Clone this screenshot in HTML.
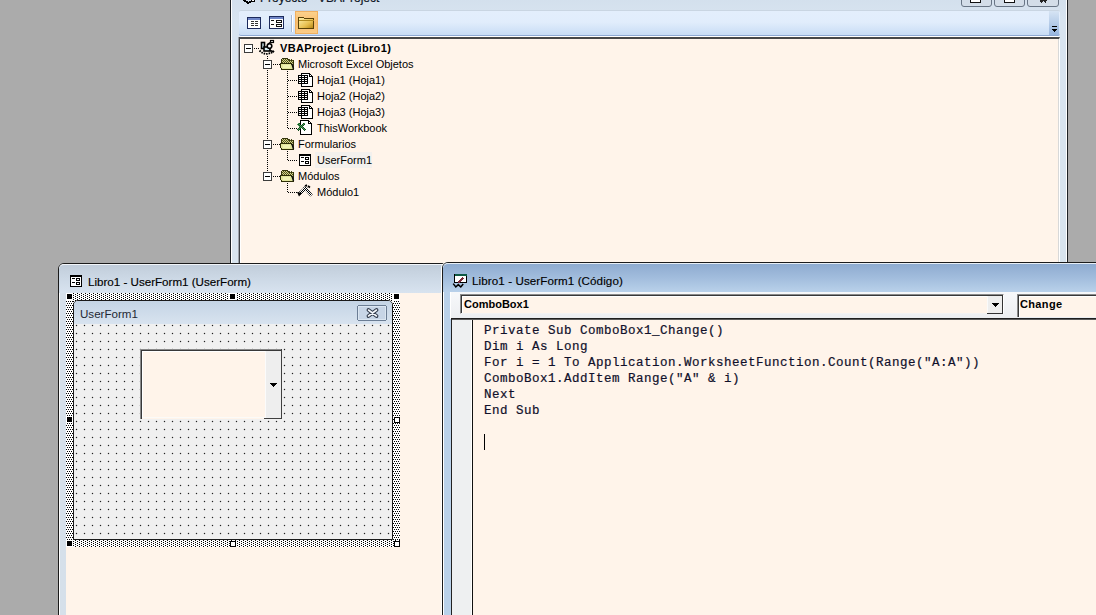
<!DOCTYPE html>
<html><head><meta charset="utf-8">
<style>
*{box-sizing:border-box}
html,body{margin:0;padding:0}
body{width:1096px;height:615px;overflow:hidden;background:#ababab;position:relative;font-family:"Liberation Sans",sans-serif;color:#000}
.a{position:absolute}
.t{position:absolute;white-space:nowrap;line-height:1}
svg.o{position:absolute;left:0;top:0;width:1096px;height:615px;overflow:visible}
#proj{left:230px;top:-20px;width:838px;height:290px;border:1px solid #1c2024;border-top:none;background:linear-gradient(#cfdcea,#d8e4f0 40px,#d8e4ee);box-shadow:inset 1px 0 0 #fff,inset -1px 0 0 #fff}
#tb{left:239px;top:10px;width:821px;height:27px;border-radius:2px;background:linear-gradient(#e3eefc,#e1edfc 45%,#c6dbf4 100%);border-top:1px solid #c9d5e2;border-bottom:1px solid #fff;box-shadow:inset 0 -1px 0 #8ea9d2}
#tree{left:239px;top:37px;width:821px;height:240px;background:#fff4ea;border-top:2px solid #474747;border-left:1px solid #404448;border-right:1px solid #fff;box-shadow:inset 1px 0 0 #fff,inset -1px 0 0 #d8d8d8,-1px 0 0 #a0a4ac}
.tr{font-size:11px;color:#000}
#ufw{left:58px;top:263px;width:400px;height:400px;border:1px solid #1b1b1b;border-top-left-radius:6px;background:linear-gradient(90deg,#d6e0ea,#cfdfee);box-shadow:inset 1px 0 0 #fff}
#uftitle{left:59px;top:264px;width:390px;height:29px;border-top-left-radius:5px;border-top:1px solid #f2f5f9;background:linear-gradient(#c0ccda,#c6d2df 20%,#cfdbe8 60%,#d8e3ef)}
#ufclient{left:66px;top:293px;width:390px;height:330px;background:#fff4ea}
#form{left:73px;top:300px;width:320px;height:240px;border:1px solid #1a1a1a;border-top-left-radius:5px;border-top-right-radius:5px;background-color:#f0f0f0;overflow:hidden}
#formtitle{left:0;top:0;width:318px;height:23px;background:linear-gradient(#c4d4e5,#d8e3ef)}
#cw{left:442px;top:262px;width:700px;height:400px;border:1px solid #1b1b1b;border-top-left-radius:6px;background:#b9d1ea;box-shadow:-1px 0 0 #fff,inset 1px 0 0 #fff}
#cwtitle{left:443px;top:263px;width:660px;height:29px;border-top-left-radius:5px;border-top:1px solid #e6eef6;background:linear-gradient(#8eabd0,#a2bddd 50%,#b9d1ea)}
#cwbar{left:450px;top:292px;width:660px;height:27px;background:linear-gradient(#f7f8fa,#eceef1);border-left:1px solid #fff}
#cbo1{left:460px;top:294px;width:544px;height:20px;background:#fff4ea;border-top:1px solid #8a8a8a;border-left:1px solid #8a8a8a;border-bottom:1px solid #f3f3f3;border-right:1px solid #fff;box-shadow:inset 1px 1px 0 #383838,inset 2px 2px 0 #fff}
#cbo2{left:1017px;top:294px;width:100px;height:23px;background:#fff4ea;border-top:1px solid #8a8a8a;border-left:1px solid #8a8a8a;box-shadow:inset 1px 1px 0 #383838,inset 2px 2px 0 #fff}
#code{left:451px;top:318px;width:660px;height:320px;background:#fff4ea;border-top:1px solid #1e1e1e;border-left:1px solid #222;box-shadow:inset 0 1px 0 #5a5a5a}
#gutter{left:452px;top:320px;width:20px;height:300px;background:#eef0f1;border-right:1px solid #fff}
#gsep{left:472px;top:320px;width:1px;height:300px;background:#111}
.cl{font-family:"Liberation Mono",monospace;font-size:12.5px;letter-spacing:0.5px;color:#10102a;-webkit-text-stroke:0.2px #10102a}
.tt{font-size:11.6px;color:#000;-webkit-text-stroke:0.15px #000}
</style></head>
<body>
<svg width="0" height="0" style="position:absolute">
<defs>
<pattern id="hh" x="0" y="1" width="4" height="2" patternUnits="userSpaceOnUse"><rect width="4" height="2" fill="#fff"/><rect x="1" y="0" width="1" height="1" fill="#000"/><rect x="3" y="1" width="1" height="1" fill="#000"/></pattern>
<pattern id="hv" x="0" y="0" width="2" height="4" patternUnits="userSpaceOnUse"><rect width="2" height="4" fill="#fff"/><rect x="0" y="1" width="1" height="1" fill="#000"/><rect x="1" y="3" width="1" height="1" fill="#000"/></pattern>
<pattern id="gd" x="75" y="324" width="8" height="8" patternUnits="userSpaceOnUse"><rect x="1" y="0" width="1" height="3" fill="#d6d6d6"/><rect x="0" y="1" width="3" height="1" fill="#d6d6d6"/><rect x="1" y="1" width="1" height="1" fill="#222"/></pattern>
<linearGradient id="og" x1="0" y1="0" x2="0" y2="1"><stop offset="0" stop-color="#fcd28e"/><stop offset=".5" stop-color="#f8bd6c"/><stop offset="1" stop-color="#fbcd88"/></linearGradient>
<linearGradient id="fg" x1="0" y1="0" x2="1" y2="1"><stop offset="0" stop-color="#fff2b0"/><stop offset=".6" stop-color="#e8c050"/><stop offset="1" stop-color="#b08010"/></linearGradient>
<linearGradient id="chv" x1="0" y1="0" x2="0" y2="1"><stop offset="0" stop-color="#d6e4f4"/><stop offset="1" stop-color="#98b6de"/></linearGradient>
<pattern id="ck" x="0" y="0" width="2" height="2" patternUnits="userSpaceOnUse"><rect width="2" height="2" fill="#fff"/><rect width="1" height="1" fill="#000"/><rect x="1" y="1" width="1" height="1" fill="#000"/></pattern>
</defs></svg>

<!-- project window -->
<div id="proj" class="a"></div>
<div class="t" style="left:260px;top:-8px;font-size:12px;color:#101828;-webkit-text-stroke:0.2px #101828">Proyecto - VBAProject</div>
<div class="a" style="left:961px;top:-10px;width:31px;height:17px;border:1px solid #687585;border-radius:3px;background:#d3dde8"></div>
<div class="a" style="left:994px;top:-10px;width:31px;height:17px;border:1px solid #687585;border-radius:3px;background:#d3dde8"></div>
<div class="a" style="left:1027px;top:-10px;width:32px;height:17px;border:1px solid #687585;border-radius:3px;background:#d3dde8"></div>
<div id="tb" class="a"></div>
<div id="tree" class="a"></div>
<svg class="o" shape-rendering="crispEdges">
<g fill="#000">
<rect x="267" y="56" width="1" height="1"/>
<rect x="267" y="58" width="1" height="1"/>
<rect x="267" y="60" width="1" height="1"/>
<rect x="267" y="62" width="1" height="1"/>
<rect x="267" y="64" width="1" height="1"/>
<rect x="267" y="66" width="1" height="1"/>
<rect x="267" y="68" width="1" height="1"/>
<rect x="267" y="70" width="1" height="1"/>
<rect x="267" y="72" width="1" height="1"/>
<rect x="267" y="74" width="1" height="1"/>
<rect x="267" y="76" width="1" height="1"/>
<rect x="267" y="78" width="1" height="1"/>
<rect x="267" y="80" width="1" height="1"/>
<rect x="267" y="82" width="1" height="1"/>
<rect x="267" y="84" width="1" height="1"/>
<rect x="267" y="86" width="1" height="1"/>
<rect x="267" y="88" width="1" height="1"/>
<rect x="267" y="90" width="1" height="1"/>
<rect x="267" y="92" width="1" height="1"/>
<rect x="267" y="94" width="1" height="1"/>
<rect x="267" y="96" width="1" height="1"/>
<rect x="267" y="98" width="1" height="1"/>
<rect x="267" y="100" width="1" height="1"/>
<rect x="267" y="102" width="1" height="1"/>
<rect x="267" y="104" width="1" height="1"/>
<rect x="267" y="106" width="1" height="1"/>
<rect x="267" y="108" width="1" height="1"/>
<rect x="267" y="110" width="1" height="1"/>
<rect x="267" y="112" width="1" height="1"/>
<rect x="267" y="114" width="1" height="1"/>
<rect x="267" y="116" width="1" height="1"/>
<rect x="267" y="118" width="1" height="1"/>
<rect x="267" y="120" width="1" height="1"/>
<rect x="267" y="122" width="1" height="1"/>
<rect x="267" y="124" width="1" height="1"/>
<rect x="267" y="126" width="1" height="1"/>
<rect x="267" y="128" width="1" height="1"/>
<rect x="267" y="130" width="1" height="1"/>
<rect x="267" y="132" width="1" height="1"/>
<rect x="267" y="134" width="1" height="1"/>
<rect x="267" y="136" width="1" height="1"/>
<rect x="267" y="138" width="1" height="1"/>
<rect x="267" y="140" width="1" height="1"/>
<rect x="267" y="142" width="1" height="1"/>
<rect x="267" y="144" width="1" height="1"/>
<rect x="267" y="146" width="1" height="1"/>
<rect x="267" y="148" width="1" height="1"/>
<rect x="267" y="150" width="1" height="1"/>
<rect x="267" y="152" width="1" height="1"/>
<rect x="267" y="154" width="1" height="1"/>
<rect x="267" y="156" width="1" height="1"/>
<rect x="267" y="158" width="1" height="1"/>
<rect x="267" y="160" width="1" height="1"/>
<rect x="267" y="162" width="1" height="1"/>
<rect x="267" y="164" width="1" height="1"/>
<rect x="267" y="166" width="1" height="1"/>
<rect x="267" y="168" width="1" height="1"/>
<rect x="267" y="170" width="1" height="1"/>
<rect x="287" y="71" width="1" height="1"/>
<rect x="287" y="73" width="1" height="1"/>
<rect x="287" y="75" width="1" height="1"/>
<rect x="287" y="77" width="1" height="1"/>
<rect x="287" y="79" width="1" height="1"/>
<rect x="287" y="81" width="1" height="1"/>
<rect x="287" y="83" width="1" height="1"/>
<rect x="287" y="85" width="1" height="1"/>
<rect x="287" y="87" width="1" height="1"/>
<rect x="287" y="89" width="1" height="1"/>
<rect x="287" y="91" width="1" height="1"/>
<rect x="287" y="93" width="1" height="1"/>
<rect x="287" y="95" width="1" height="1"/>
<rect x="287" y="97" width="1" height="1"/>
<rect x="287" y="99" width="1" height="1"/>
<rect x="287" y="101" width="1" height="1"/>
<rect x="287" y="103" width="1" height="1"/>
<rect x="287" y="105" width="1" height="1"/>
<rect x="287" y="107" width="1" height="1"/>
<rect x="287" y="109" width="1" height="1"/>
<rect x="287" y="111" width="1" height="1"/>
<rect x="287" y="113" width="1" height="1"/>
<rect x="287" y="115" width="1" height="1"/>
<rect x="287" y="117" width="1" height="1"/>
<rect x="287" y="119" width="1" height="1"/>
<rect x="287" y="121" width="1" height="1"/>
<rect x="287" y="123" width="1" height="1"/>
<rect x="287" y="125" width="1" height="1"/>
<rect x="287" y="127" width="1" height="1"/>
<rect x="287" y="151" width="1" height="1"/>
<rect x="287" y="153" width="1" height="1"/>
<rect x="287" y="155" width="1" height="1"/>
<rect x="287" y="157" width="1" height="1"/>
<rect x="287" y="159" width="1" height="1"/>
<rect x="287" y="183" width="1" height="1"/>
<rect x="287" y="185" width="1" height="1"/>
<rect x="287" y="187" width="1" height="1"/>
<rect x="287" y="189" width="1" height="1"/>
<rect x="287" y="191" width="1" height="1"/>
<rect x="254" y="48" width="1" height="1"/>
<rect x="256" y="48" width="1" height="1"/>
<rect x="258" y="48" width="1" height="1"/>
<rect x="273" y="64" width="1" height="1"/>
<rect x="275" y="64" width="1" height="1"/>
<rect x="277" y="64" width="1" height="1"/>
<rect x="279" y="64" width="1" height="1"/>
<rect x="273" y="144" width="1" height="1"/>
<rect x="275" y="144" width="1" height="1"/>
<rect x="277" y="144" width="1" height="1"/>
<rect x="279" y="144" width="1" height="1"/>
<rect x="273" y="176" width="1" height="1"/>
<rect x="275" y="176" width="1" height="1"/>
<rect x="277" y="176" width="1" height="1"/>
<rect x="279" y="176" width="1" height="1"/>
<rect x="288" y="80" width="1" height="1"/>
<rect x="290" y="80" width="1" height="1"/>
<rect x="292" y="80" width="1" height="1"/>
<rect x="294" y="80" width="1" height="1"/>
<rect x="296" y="80" width="1" height="1"/>
<rect x="288" y="96" width="1" height="1"/>
<rect x="290" y="96" width="1" height="1"/>
<rect x="292" y="96" width="1" height="1"/>
<rect x="294" y="96" width="1" height="1"/>
<rect x="296" y="96" width="1" height="1"/>
<rect x="288" y="112" width="1" height="1"/>
<rect x="290" y="112" width="1" height="1"/>
<rect x="292" y="112" width="1" height="1"/>
<rect x="294" y="112" width="1" height="1"/>
<rect x="296" y="112" width="1" height="1"/>
<rect x="288" y="128" width="1" height="1"/>
<rect x="290" y="128" width="1" height="1"/>
<rect x="292" y="128" width="1" height="1"/>
<rect x="294" y="128" width="1" height="1"/>
<rect x="296" y="128" width="1" height="1"/>
<rect x="288" y="160" width="1" height="1"/>
<rect x="290" y="160" width="1" height="1"/>
<rect x="292" y="160" width="1" height="1"/>
<rect x="294" y="160" width="1" height="1"/>
<rect x="296" y="160" width="1" height="1"/>
<rect x="288" y="192" width="1" height="1"/>
<rect x="290" y="192" width="1" height="1"/>
<rect x="292" y="192" width="1" height="1"/>
<rect x="294" y="192" width="1" height="1"/>
<rect x="296" y="192" width="1" height="1"/>
</g>
<rect x="244.5" y="44.5" width="8" height="8" fill="#fff" stroke="#3c3c3c"/>
<rect x="246" y="48" width="5" height="1" fill="#000"/>
<rect x="263.5" y="60.5" width="8" height="8" fill="#fff" stroke="#3c3c3c"/>
<rect x="265" y="64" width="5" height="1" fill="#000"/>
<rect x="263.5" y="140.5" width="8" height="8" fill="#fff" stroke="#3c3c3c"/>
<rect x="265" y="144" width="5" height="1" fill="#000"/>
<rect x="263.5" y="172.5" width="8" height="8" fill="#fff" stroke="#3c3c3c"/>
<rect x="265" y="176" width="5" height="1" fill="#000"/>
<path d="M259.5 50.5Q266 57 274 51" stroke="#000" stroke-width="1.8" stroke-dasharray="1.6 0.9" fill="none" shape-rendering="geometricPrecision"/>
<rect x="261.5" y="42.5" width="3" height="6" fill="#cfeaf0" stroke="#000" stroke-width="1.6" shape-rendering="geometricPrecision"/>
<rect x="264" y="47" width="6" height="4" fill="#d8eef4" stroke="#000" stroke-width="1.6" shape-rendering="geometricPrecision"/>
<circle cx="269.5" cy="46" r="2.3" fill="#fff" stroke="#000" stroke-width="1.6" shape-rendering="geometricPrecision"/>
<path d="M268 44L271.5 41.5" stroke="#000" stroke-width="1.3" shape-rendering="geometricPrecision"/>
<rect x="270.5" y="40.5" width="3" height="2" fill="#fff" stroke="#000" stroke-width="1.2" shape-rendering="geometricPrecision"/>
<path d="M269 50L274 52" stroke="#000" stroke-width="1.8" shape-rendering="geometricPrecision"/>
<path d="M281.5 69.5V59.5L282.5 58.5H287.5L288.5 60.5H293.5V69.5" fill="#d4d48c" stroke="#34340c"/>
<rect x="283" y="59" width="1" height="1" fill="#50501a"/>
<rect x="285" y="59" width="1" height="1" fill="#50501a"/>
<rect x="287" y="59" width="1" height="1" fill="#50501a"/>
<rect x="289" y="59" width="1" height="1" fill="#50501a"/>
<rect x="291" y="59" width="1" height="1" fill="#50501a"/>
<rect x="282" y="60" width="1" height="1" fill="#50501a"/>
<rect x="284" y="60" width="1" height="1" fill="#50501a"/>
<rect x="286" y="60" width="1" height="1" fill="#50501a"/>
<rect x="288" y="60" width="1" height="1" fill="#50501a"/>
<rect x="290" y="60" width="1" height="1" fill="#50501a"/>
<rect x="292" y="60" width="1" height="1" fill="#50501a"/>
<rect x="283" y="61" width="1" height="1" fill="#50501a"/>
<rect x="285" y="61" width="1" height="1" fill="#50501a"/>
<rect x="287" y="61" width="1" height="1" fill="#50501a"/>
<rect x="289" y="61" width="1" height="1" fill="#50501a"/>
<rect x="291" y="61" width="1" height="1" fill="#50501a"/>
<rect x="282" y="62" width="1" height="1" fill="#50501a"/>
<rect x="284" y="62" width="1" height="1" fill="#50501a"/>
<rect x="286" y="62" width="1" height="1" fill="#50501a"/>
<rect x="288" y="62" width="1" height="1" fill="#50501a"/>
<rect x="290" y="62" width="1" height="1" fill="#50501a"/>
<rect x="292" y="62" width="1" height="1" fill="#50501a"/>
<path d="M280.5 63.5H291.5L293.5 68.5V69.5H281.5L280.5 66.5Z" fill="#e2e69c" stroke="#2e2e08"/>
<rect x="283" y="65" width="7" height="3" fill="#f0f2b4"/>
<path d="M292 64L293.5 69" stroke="#111" stroke-width="1.5" shape-rendering="geometricPrecision"/>
<path d="M301.5 73.5H309.5L312.5 76.5V86.5H301.5Z" fill="#fff" stroke="#000"/>
<path d="M309.5 73.5V76.5H312.5" fill="none" stroke="#000"/>
<rect x="298" y="75" width="10" height="9" fill="#000"/>
<rect x="299" y="76" width="2" height="1" fill="#fff"/>
<rect x="299" y="78" width="2" height="1" fill="#fff"/>
<rect x="299" y="80" width="2" height="1" fill="#fff"/>
<rect x="299" y="82" width="2" height="1" fill="#fff"/>
<rect x="302" y="76" width="2" height="1" fill="#fff"/>
<rect x="302" y="78" width="2" height="1" fill="#fff"/>
<rect x="302" y="80" width="2" height="1" fill="#fff"/>
<rect x="302" y="82" width="2" height="1" fill="#fff"/>
<rect x="305" y="76" width="2" height="1" fill="#fff"/>
<rect x="305" y="78" width="2" height="1" fill="#fff"/>
<rect x="305" y="80" width="2" height="1" fill="#fff"/>
<rect x="305" y="82" width="2" height="1" fill="#fff"/>
<path d="M301.5 89.5H309.5L312.5 92.5V102.5H301.5Z" fill="#fff" stroke="#000"/>
<path d="M309.5 89.5V92.5H312.5" fill="none" stroke="#000"/>
<rect x="298" y="91" width="10" height="9" fill="#000"/>
<rect x="299" y="92" width="2" height="1" fill="#fff"/>
<rect x="299" y="94" width="2" height="1" fill="#fff"/>
<rect x="299" y="96" width="2" height="1" fill="#fff"/>
<rect x="299" y="98" width="2" height="1" fill="#fff"/>
<rect x="302" y="92" width="2" height="1" fill="#fff"/>
<rect x="302" y="94" width="2" height="1" fill="#fff"/>
<rect x="302" y="96" width="2" height="1" fill="#fff"/>
<rect x="302" y="98" width="2" height="1" fill="#fff"/>
<rect x="305" y="92" width="2" height="1" fill="#fff"/>
<rect x="305" y="94" width="2" height="1" fill="#fff"/>
<rect x="305" y="96" width="2" height="1" fill="#fff"/>
<rect x="305" y="98" width="2" height="1" fill="#fff"/>
<path d="M301.5 105.5H309.5L312.5 108.5V118.5H301.5Z" fill="#fff" stroke="#000"/>
<path d="M309.5 105.5V108.5H312.5" fill="none" stroke="#000"/>
<rect x="298" y="107" width="10" height="9" fill="#000"/>
<rect x="299" y="108" width="2" height="1" fill="#fff"/>
<rect x="299" y="110" width="2" height="1" fill="#fff"/>
<rect x="299" y="112" width="2" height="1" fill="#fff"/>
<rect x="299" y="114" width="2" height="1" fill="#fff"/>
<rect x="302" y="108" width="2" height="1" fill="#fff"/>
<rect x="302" y="110" width="2" height="1" fill="#fff"/>
<rect x="302" y="112" width="2" height="1" fill="#fff"/>
<rect x="302" y="114" width="2" height="1" fill="#fff"/>
<rect x="305" y="108" width="2" height="1" fill="#fff"/>
<rect x="305" y="110" width="2" height="1" fill="#fff"/>
<rect x="305" y="112" width="2" height="1" fill="#fff"/>
<rect x="305" y="114" width="2" height="1" fill="#fff"/>
<path d="M300.5 120.5H308.5L311.5 123.5V134.5H300.5Z" fill="#fff" stroke="#000"/>
<path d="M308.5 120.5V123.5H311.5" fill="none" stroke="#000"/>
<rect x="298" y="123" width="1" height="1" fill="#4c9a5a"/>
<rect x="299" y="123" width="1" height="1" fill="#0f4a1c"/>
<rect x="303" y="123" width="1" height="1" fill="#0f4a1c"/>
<rect x="304" y="123" width="1" height="1" fill="#4c9a5a"/>
<rect x="297" y="124" width="1" height="1" fill="#4c9a5a"/>
<rect x="298" y="124" width="1" height="1" fill="#0f4a1c"/>
<rect x="299" y="124" width="1" height="1" fill="#4c9a5a"/>
<rect x="302" y="124" width="1" height="1" fill="#0f4a1c"/>
<rect x="303" y="124" width="1" height="1" fill="#4c9a5a"/>
<rect x="304" y="124" width="1" height="1" fill="#0f4a1c"/>
<rect x="298" y="125" width="1" height="1" fill="#4c9a5a"/>
<rect x="299" y="125" width="1" height="1" fill="#0f4a1c"/>
<rect x="300" y="125" width="1" height="1" fill="#4c9a5a"/>
<rect x="301" y="125" width="1" height="1" fill="#0f4a1c"/>
<rect x="302" y="125" width="1" height="1" fill="#4c9a5a"/>
<rect x="303" y="125" width="1" height="1" fill="#0f4a1c"/>
<rect x="299" y="126" width="1" height="1" fill="#4c9a5a"/>
<rect x="300" y="126" width="1" height="1" fill="#0f4a1c"/>
<rect x="301" y="126" width="1" height="1" fill="#4c9a5a"/>
<rect x="302" y="126" width="1" height="1" fill="#0f4a1c"/>
<rect x="299" y="127" width="1" height="1" fill="#0f4a1c"/>
<rect x="300" y="127" width="1" height="1" fill="#4c9a5a"/>
<rect x="301" y="127" width="1" height="1" fill="#0f4a1c"/>
<rect x="302" y="127" width="1" height="1" fill="#4c9a5a"/>
<rect x="303" y="127" width="1" height="1" fill="#0f4a1c"/>
<rect x="298" y="128" width="1" height="1" fill="#0f4a1c"/>
<rect x="299" y="128" width="1" height="1" fill="#4c9a5a"/>
<rect x="300" y="128" width="1" height="1" fill="#0f4a1c"/>
<rect x="302" y="128" width="1" height="1" fill="#0f4a1c"/>
<rect x="303" y="128" width="1" height="1" fill="#4c9a5a"/>
<rect x="304" y="128" width="1" height="1" fill="#0f4a1c"/>
<rect x="297" y="129" width="1" height="1" fill="#0f4a1c"/>
<rect x="298" y="129" width="1" height="1" fill="#4c9a5a"/>
<rect x="299" y="129" width="1" height="1" fill="#0f4a1c"/>
<rect x="303" y="129" width="1" height="1" fill="#0f4a1c"/>
<rect x="304" y="129" width="1" height="1" fill="#4c9a5a"/>
<rect x="305" y="129" width="1" height="1" fill="#0f4a1c"/>
<rect x="298" y="130" width="1" height="1" fill="#0f4a1c"/>
<rect x="304" y="130" width="1" height="1" fill="#0f4a1c"/>
<path d="M281.5 149.5V139.5L282.5 138.5H287.5L288.5 140.5H293.5V149.5" fill="#d4d48c" stroke="#34340c"/>
<rect x="283" y="139" width="1" height="1" fill="#50501a"/>
<rect x="285" y="139" width="1" height="1" fill="#50501a"/>
<rect x="287" y="139" width="1" height="1" fill="#50501a"/>
<rect x="289" y="139" width="1" height="1" fill="#50501a"/>
<rect x="291" y="139" width="1" height="1" fill="#50501a"/>
<rect x="282" y="140" width="1" height="1" fill="#50501a"/>
<rect x="284" y="140" width="1" height="1" fill="#50501a"/>
<rect x="286" y="140" width="1" height="1" fill="#50501a"/>
<rect x="288" y="140" width="1" height="1" fill="#50501a"/>
<rect x="290" y="140" width="1" height="1" fill="#50501a"/>
<rect x="292" y="140" width="1" height="1" fill="#50501a"/>
<rect x="283" y="141" width="1" height="1" fill="#50501a"/>
<rect x="285" y="141" width="1" height="1" fill="#50501a"/>
<rect x="287" y="141" width="1" height="1" fill="#50501a"/>
<rect x="289" y="141" width="1" height="1" fill="#50501a"/>
<rect x="291" y="141" width="1" height="1" fill="#50501a"/>
<rect x="282" y="142" width="1" height="1" fill="#50501a"/>
<rect x="284" y="142" width="1" height="1" fill="#50501a"/>
<rect x="286" y="142" width="1" height="1" fill="#50501a"/>
<rect x="288" y="142" width="1" height="1" fill="#50501a"/>
<rect x="290" y="142" width="1" height="1" fill="#50501a"/>
<rect x="292" y="142" width="1" height="1" fill="#50501a"/>
<path d="M280.5 143.5H291.5L293.5 148.5V149.5H281.5L280.5 146.5Z" fill="#e2e69c" stroke="#2e2e08"/>
<rect x="283" y="145" width="7" height="3" fill="#f0f2b4"/>
<path d="M292 144L293.5 149" stroke="#111" stroke-width="1.5" shape-rendering="geometricPrecision"/>
<rect x="299.5" y="154.5" width="11" height="11" fill="#fff" stroke="#000"/>
<rect x="299" y="154" width="12" height="2" fill="#000"/>
<rect x="301" y="157" width="3" height="1" fill="#000"/>
<rect x="301" y="161" width="3" height="1" fill="#000"/>
<rect x="305.5" y="157.5" width="3" height="2" fill="#fff" stroke="#000"/>
<rect x="305.5" y="161.5" width="3" height="2" fill="#fff" stroke="#000"/>
<path d="M281.5 181.5V171.5L282.5 170.5H287.5L288.5 172.5H293.5V181.5" fill="#d4d48c" stroke="#34340c"/>
<rect x="283" y="171" width="1" height="1" fill="#50501a"/>
<rect x="285" y="171" width="1" height="1" fill="#50501a"/>
<rect x="287" y="171" width="1" height="1" fill="#50501a"/>
<rect x="289" y="171" width="1" height="1" fill="#50501a"/>
<rect x="291" y="171" width="1" height="1" fill="#50501a"/>
<rect x="282" y="172" width="1" height="1" fill="#50501a"/>
<rect x="284" y="172" width="1" height="1" fill="#50501a"/>
<rect x="286" y="172" width="1" height="1" fill="#50501a"/>
<rect x="288" y="172" width="1" height="1" fill="#50501a"/>
<rect x="290" y="172" width="1" height="1" fill="#50501a"/>
<rect x="292" y="172" width="1" height="1" fill="#50501a"/>
<rect x="283" y="173" width="1" height="1" fill="#50501a"/>
<rect x="285" y="173" width="1" height="1" fill="#50501a"/>
<rect x="287" y="173" width="1" height="1" fill="#50501a"/>
<rect x="289" y="173" width="1" height="1" fill="#50501a"/>
<rect x="291" y="173" width="1" height="1" fill="#50501a"/>
<rect x="282" y="174" width="1" height="1" fill="#50501a"/>
<rect x="284" y="174" width="1" height="1" fill="#50501a"/>
<rect x="286" y="174" width="1" height="1" fill="#50501a"/>
<rect x="288" y="174" width="1" height="1" fill="#50501a"/>
<rect x="290" y="174" width="1" height="1" fill="#50501a"/>
<rect x="292" y="174" width="1" height="1" fill="#50501a"/>
<path d="M280.5 175.5H291.5L293.5 180.5V181.5H281.5L280.5 178.5Z" fill="#e2e69c" stroke="#2e2e08"/>
<rect x="283" y="177" width="7" height="3" fill="#f0f2b4"/>
<path d="M292 176L293.5 181" stroke="#111" stroke-width="1.5" shape-rendering="geometricPrecision"/>
<path d="M299 194L307 187" stroke="url(#ck)" stroke-width="3.2" shape-rendering="geometricPrecision"/>
<path d="M304 187L311.5 195.5" stroke="url(#ck)" stroke-width="3.2" shape-rendering="geometricPrecision"/>
<path d="M297 192L302 193L299 196.5Z" fill="#000" shape-rendering="geometricPrecision"/>
<path d="M305 186L307 185M308 186L310 187.5" stroke="#000" stroke-width="1.6" shape-rendering="geometricPrecision"/>
<rect x="247.5" y="17.5" width="13" height="11" fill="#fff" stroke="#1c2a5c"/>
<rect x="248" y="18" width="12" height="2" fill="#6f86c8"/>
<rect x="251" y="21" width="3" height="1" fill="#333"/><rect x="255" y="21" width="3" height="1" fill="#333"/>
<rect x="251" y="23" width="3" height="1" fill="#333"/><rect x="255" y="23" width="3" height="1" fill="#333"/>
<rect x="251" y="25" width="3" height="1" fill="#333"/><rect x="255" y="25" width="3" height="1" fill="#333"/>
<rect x="269.5" y="16.5" width="14" height="12" fill="#fff" stroke="#1c2a5c"/>
<rect x="270" y="17" width="13" height="2" fill="#6f86c8"/>
<rect x="271" y="20" width="3" height="1" fill="#111"/><rect x="271" y="24" width="3" height="1" fill="#111"/>
<rect x="276.5" y="20.5" width="5" height="2" fill="#fff" stroke="#111"/>
<rect x="276.5" y="24.5" width="5" height="2" fill="#fff" stroke="#111"/>
<rect x="291" y="15" width="1" height="17" fill="#a9bcd6"/>
<rect x="292" y="15" width="1" height="17" fill="#fff"/>
<rect x="295.5" y="11.5" width="22" height="22" rx="1" fill="url(#og)" stroke="#f0b060"/>
<path d="M298.5 28.5V17.5H303.5L304.5 18.5H313.5V28.5Z" fill="url(#fg)" stroke="#5a4208"/>
<path d="M298.5 20.5H313.5" stroke="#b08a20"/>

<rect x="970.5" y="-3.5" width="10" height="6" fill="#fff" stroke="#111" stroke-width="1.4"/>
<rect x="1004.5" y="-3.5" width="10" height="6" fill="#fff" stroke="#111" stroke-width="1.4"/>
<path d="M1038 -3L1041.5 1L1043.5 -1L1045.5 1L1049 -3" stroke="#222" stroke-width="2.2" fill="none"/>
<rect x="1049" y="11" width="10" height="24" fill="url(#chv)"/>
<rect x="1052" y="26" width="5" height="1" fill="#000"/>
<path d="M1051.5 28.5H1057.5L1054.5 32Z" fill="#000"/>
<path d="M241 -2L248 3L254 0" stroke="#000" stroke-width="2" fill="none"/>
<rect x="251.5" y="-1.5" width="3" height="3" fill="#fff" stroke="#000"/>

</svg>
<div class="t tr" style="left:280px;top:43px;font-weight:bold;letter-spacing:0.35px">VBAProject (Libro1)</div>
<div class="t tr" style="left:298px;top:59px">Microsoft Excel Objetos</div>
<div class="t tr" style="left:317px;top:75px">Hoja1 (Hoja1)</div>
<div class="t tr" style="left:317px;top:91px">Hoja2 (Hoja2)</div>
<div class="t tr" style="left:317px;top:107px">Hoja3 (Hoja3)</div>
<div class="t tr" style="left:317px;top:123px">ThisWorkbook</div>
<div class="t tr" style="left:298px;top:139px">Formularios</div>
<div class="a" style="left:315px;top:152px;width:57px;height:16px;background:#f3f0ed"></div>
<div class="t tr" style="left:317px;top:155px">UserForm1</div>
<div class="t tr" style="left:298px;top:171px">Módulos</div>
<div class="t tr" style="left:317px;top:187px">Módulo1</div>

<!-- userform window -->
<div id="ufw" class="a"></div>
<div id="uftitle" class="a"></div>
<div id="ufclient" class="a"></div>
<div class="t tt" style="left:88px;top:276px">Libro1 - UserForm1 (UserForm)</div>
<svg class="o" shape-rendering="crispEdges"><rect x="66" y="293" width="334" height="254" fill="url(#hh)"/></svg>
<div id="form" class="a">
  <div id="formtitle" class="a"></div>
</div>
<svg class="o" shape-rendering="crispEdges">
<rect x="74" y="323" width="318" height="216" fill="url(#gd)"/>
<rect x="66" y="293" width="334" height="7" fill="url(#hh)"/>
<rect x="66" y="540" width="334" height="7" fill="url(#hh)"/>
<rect x="66" y="300" width="7" height="240" fill="url(#hv)"/>
<rect x="393" y="300" width="7" height="240" fill="url(#hv)"/>
<rect x="66" y="293" width="7" height="7" fill="#fff"/>
<rect x="67" y="294" width="5" height="5" fill="#000"/>
<rect x="229" y="293" width="7" height="7" fill="#fff"/>
<rect x="230" y="294" width="5" height="5" fill="#000"/>
<rect x="393" y="293" width="7" height="7" fill="#fff"/>
<rect x="394" y="294" width="5" height="5" fill="#000"/>
<rect x="66" y="416" width="7" height="7" fill="#fff"/>
<rect x="67" y="417" width="5" height="5" fill="#000"/>
<rect x="394.5" y="417.5" width="5" height="5" fill="#fff" stroke="#000"/>
<rect x="66" y="540" width="7" height="7" fill="#fff"/>
<rect x="67" y="541" width="5" height="5" fill="#000"/>
<rect x="230.5" y="541.5" width="5" height="5" fill="#fff" stroke="#000"/>
<rect x="394.5" y="541.5" width="5" height="5" fill="#fff" stroke="#000"/>
<rect x="357.5" y="305.5" width="29" height="15" rx="2" fill="#c7d5e6" stroke="#6b7d94"/>
<rect x="358.5" y="306.5" width="27" height="13" rx="1" fill="none" stroke="#e4ecf5" opacity=".7"/>
<g shape-rendering="geometricPrecision"><path d="M368.5 310L376.5 316M376.5 310L368.5 316" stroke="#2e3848" stroke-width="3.8" stroke-linecap="round"/>
<path d="M368.5 310L376.5 316M376.5 310L368.5 316" stroke="#f4f7fb" stroke-width="1.6" stroke-linecap="round"/></g>

<rect x="140" y="349" width="142" height="70" fill="#fff4ea"/>
<rect x="140" y="349" width="142" height="1" fill="#8a8a8a"/>
<rect x="140" y="349" width="1" height="70" fill="#8a8a8a"/>
<rect x="141" y="350" width="140" height="1" fill="#383838"/>
<rect x="141" y="350" width="1" height="69" fill="#383838"/>
<rect x="142" y="351" width="123" height="1" fill="#fff"/>
<rect x="142" y="351" width="1" height="67" fill="#fff"/>
<rect x="142" y="417" width="123" height="1" fill="#fbfaf8"/>
<rect x="265" y="351" width="16" height="67" fill="#eeeeee"/>
<rect x="265" y="351" width="1" height="67" fill="#fbfbfb"/>
<rect x="281" y="349" width="1" height="70" fill="#404040"/>
<rect x="264" y="418" width="18" height="1" fill="#404040"/>
<path d="M269 383H277L273 387Z" fill="#000"/>

<rect x="70.5" y="275.5" width="11" height="11" fill="#fff" stroke="#000"/>
<rect x="70" y="275" width="12" height="2" fill="#000"/>
<rect x="72" y="278" width="3" height="1" fill="#000"/><rect x="72" y="282" width="3" height="1" fill="#000"/>
<rect x="76.5" y="278.5" width="3" height="2" fill="#fff" stroke="#000"/>
<rect x="76.5" y="282.5" width="3" height="2" fill="#fff" stroke="#000"/>

</svg>
<div class="t" style="left:80px;top:308px;font-size:11.6px;color:#1f2833">UserForm1</div>

<!-- code window -->
<div id="cw" class="a"></div>
<div id="cwtitle" class="a"></div>
<div class="t tt" style="left:472px;top:275px;letter-spacing:0.1px">Libro1 - UserForm1 (Código)</div>
<div id="cwbar" class="a"></div>
<div id="cbo1" class="a"></div>
<div id="cbo2" class="a"></div>
<div class="t" style="left:464px;top:299px;font-size:11px;font-weight:bold">ComboBox1</div>
<div class="t" style="left:1020px;top:299px;font-size:11px;font-weight:bold;letter-spacing:0.35px">Change</div>
<div id="code" class="a"></div>
<div id="gutter" class="a"></div>
<div id="gsep" class="a"></div>
<svg class="o" shape-rendering="crispEdges">

<rect x="454.5" y="274.5" width="12" height="8" fill="#fff" stroke="#000"/>
<rect x="455" y="274" width="12" height="2" fill="#0f5a46"/>
<path d="M463 278L458 283" stroke="#7a2a3a" stroke-width="1.5"/>
<path d="M453.2 283.6L455.8 287L458.3 284.6L460.8 287L463.2 284" stroke="#000" stroke-width="1.5" fill="none" shape-rendering="geometricPrecision"/>

<rect x="987" y="296" width="16" height="17" fill="#eeeeee"/>
<rect x="987" y="296" width="1" height="17" fill="#fafafa"/>
<rect x="1002" y="295" width="1" height="19" fill="#333"/>
<rect x="987" y="313" width="16" height="1" fill="#333"/>
<path d="M992 303H999L995.5 307Z" fill="#000"/>

</svg>
<div class="a cl" style="left:484px;top:323px;line-height:16px;white-space:pre">Private Sub ComboBox1_Change()
Dim i As Long
For i = 1 To Application.WorksheetFunction.Count(Range("A:A"))
ComboBox1.AddItem Range("A" &amp; i)
Next
End Sub</div>
<div class="a" style="left:484px;top:434px;width:1px;height:16px;background:#000"></div>
</body></html>
